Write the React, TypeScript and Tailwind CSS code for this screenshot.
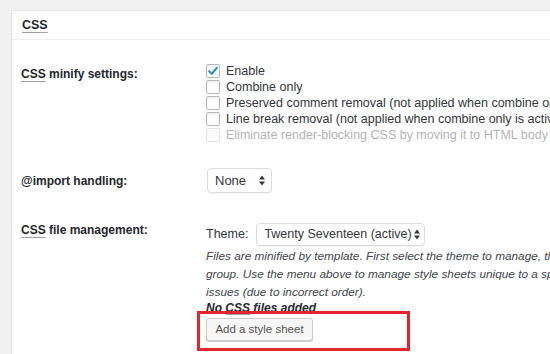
import React from 'react';

// 复选框（仿 WordPress 后台样式）
function Checkbox({ checked, disabled }: { checked?: boolean; disabled?: boolean }) {
  return (
    <span
      className={
        disabled
          ? 'w-[14px] h-[14px] shrink-0 rounded-[2px] border border-[#e2e4e7] bg-[#fbfbfb]'
          : 'w-[14px] h-[14px] shrink-0 rounded-[2px] border border-[#b4b9be] bg-white shadow-[inset_0_1px_2px_rgba(0,0,0,0.07)] flex items-center justify-center'
      }
    >
      {checked && (
        <svg width="12" height="12" viewBox="0 0 12 12">
          <path d="M2.2 6.3 L4.8 8.9 L9.8 2.8" fill="none" stroke="#1e8cbe" strokeWidth="2" strokeLinecap="round" strokeLinejoin="round" />
        </svg>
      )}
    </span>
  );
}

// 上下箭头
function Arrows() {
  return (
    <svg width="6" height="11" viewBox="0 0 6 11" className="shrink-0">
      <polygon points="0,4.5 3,0.5 6,4.5" fill="#32373c" />
      <polygon points="0,6.5 3,10.5 6,6.5" fill="#32373c" />
    </svg>
  );
}

const options = [
  { label: 'Enable', checked: true },
  { label: 'Combine only' },
  { label: 'Preserved comment removal (not applied when combine only is active)' },
  { label: 'Line break removal (not applied when combine only is active)' },
  { label: 'Eliminate render-blocking CSS by moving it to HTML body', disabled: true },
];

export default function App() {
  return (
    <div className="w-[550px] h-[354px] overflow-hidden bg-[#f1f1f1] pt-[10px] pl-[11px] font-['Liberation_Sans',Arial,sans-serif] text-[#23282d]">
      <div className="w-[640px] h-[420px] bg-white border border-[#e5e5e5]">
        {/* 标题 */}
        <div className="h-[29px] border-b border-[#eeeeee] flex items-center pl-[10px]">
          <span className="text-[12.5px] font-bold underline decoration-[#a0a0a0] underline-offset-[3px]">CSS</span>
        </div>

        <div className="pt-[23px] pl-[9px]">
          {/* CSS minify settings */}
          <div className="flex">
            <div className="w-[185px] shrink-0 pt-[3px] leading-[16px] text-[12px] font-bold">
              <span className="underline decoration-[#a0a0a0] underline-offset-[3px]">CSS</span> minify settings:
            </div>
            <div className="flex flex-col">
              {options.map((o) => (
                <div
                  key={o.label}
                  className={
                    o.disabled
                      ? 'h-[16px] flex items-center gap-[6px] text-[12.5px] whitespace-nowrap text-[#b4b4b4]'
                      : 'h-[16px] flex items-center gap-[6px] text-[12.5px] whitespace-nowrap text-[#32373c]'
                  }
                >
                  <Checkbox checked={o.checked} disabled={o.disabled} />
                  <span>{o.label}</span>
                </div>
              ))}
            </div>
          </div>

          {/* @import handling */}
          <div className="flex items-center mt-[25px]">
            <div className="w-[185px] shrink-0 text-[12px] font-bold">@import handling:</div>
            <div className="ml-[1px] w-[65px] h-[25px] rounded-[4px] border border-[#dddddd] bg-white shadow-[0_1px_1px_rgba(0,0,0,0.04)] flex items-center justify-between pl-[7px] pr-[6px] text-[13px] text-[#32373c]">
              <span>None</span>
              <Arrows />
            </div>
          </div>

          {/* CSS file management */}
          <div className="flex mt-[29px]">
            <div className="w-[185px] shrink-0 leading-[16px] text-[12px] font-bold">
              <span className="underline decoration-[#a0a0a0] underline-offset-[3px]">CSS</span> file management:
            </div>
            <div className="flex flex-col">
              <div className="mt-[1px] flex items-center gap-[8px] text-[12.5px] text-[#32373c]">
                <span>Theme:</span>
                <div className="w-[169px] h-[23px] rounded-[4px] border border-[#dddddd] bg-white shadow-[0_1px_1px_rgba(0,0,0,0.04)] flex items-center justify-between pl-[7px] pr-[4px] text-[12.5px] whitespace-nowrap">
                  <span>Twenty Seventeen (active)</span>
                  <Arrows />
                </div>
              </div>
              <div className="mt-[1px] text-[11.8px] leading-[18px] italic text-[#40464d] whitespace-nowrap">
                <div>Files are minified by template. First select the theme to manage, then add style sheets to the default</div>
                <div>group. Use the menu above to manage style sheets unique to a specific page template. Be careful of dependency</div>
                <div>issues (due to incorrect order).</div>
              </div>
              <div className="text-[12px] leading-[14px] italic font-bold text-[#23282d]">
                No <span className="underline decoration-[#a0a0a0] underline-offset-[2px]">CSS</span> files added
              </div>
              <div className="relative mt-[1px] w-fit">
                <button className="w-[107px] h-[23px] rounded-[3px] border border-[#cccccc] bg-[#f7f7f7] shadow-[0_1px_0_#cccccc] text-[11.5px] text-[#555555]">
                  Add a style sheet
                </button>
                <div className="absolute -left-[9px] -top-[5px] w-[213px] h-[40px] border-[3px] border-[#e3262c]" />
              </div>
            </div>
          </div>
        </div>
      </div>
    </div>
  );
}
